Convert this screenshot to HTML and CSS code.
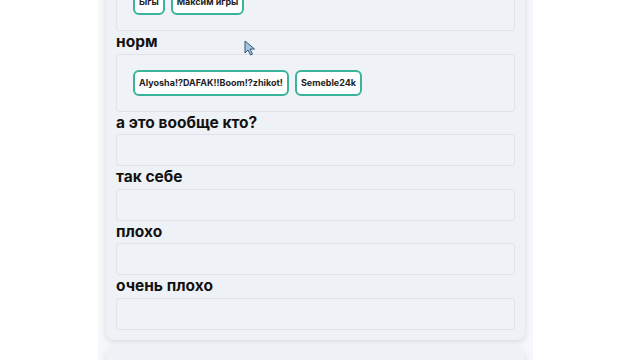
FILE: index.html
```html
<!DOCTYPE html>
<html lang="ru">
<head>
    <meta charset="UTF-8">
    <meta name="viewport" content="width=device-width, initial-scale=1.0">
    <title>Тир-лист</title>
    <link rel="stylesheet" href="styles.css">
</head>
<body>

<div class="page">
    <div class="card">
        <div class="tier-box">
            <span class="chip">Ыгы</span>
            <span class="chip">Максим игры</span>
        </div>

        <h3 class="tier-title">норм</h3>
        <div class="tier-box">
            <span class="chip">Alyosha!?DAFAK!!Boom!?zhikot!</span>
            <span class="chip">Semeble24k</span>
        </div>

        <h3 class="tier-title">а это вообще кто?</h3>
        <div class="tier-box"></div>

        <h3 class="tier-title">так себе</h3>
        <div class="tier-box"></div>

        <h3 class="tier-title">плохо</h3>
        <div class="tier-box"></div>

        <h3 class="tier-title">очень плохо</h3>
        <div class="tier-box"></div>
    </div>

    <div class="card card-next"></div>
</div>

<svg class="cursor" width="12" height="16" viewBox="0 0 12 16">
    <path d="M1 1 L1 13 L4 10 L6.5 15 L8.5 14 L6 9 L10.5 9 Z" fill="#a9c6e0" stroke="#2f5578" stroke-width="1" stroke-linejoin="round"/>
</svg>

</body>
</html>
```

FILE: styles.css
```css
body {
    margin: 0;
    background-color: #ffffff;
    font-family: Inter, "Liberation Sans", Arial, sans-serif;
    color: #111111;
    overflow: hidden;
}
.page {
    width: 435px;
    margin-left: 98px;
    padding: 0 8px;
    box-sizing: border-box;
    background-color: #f5f7fa;
    min-height: 100vh;
}
.card {
    margin-top: -37px;
    padding: 10px;
    background-color: #eef1f5;
    border-radius: 8px;
    box-shadow: 0 2px 6px rgba(0, 0, 0, 0.12);
}
.card-next {
    margin-top: 8px;
    height: 60px;
}
.tier-title {
    margin: 0;
    font-size: 15.5px;
    font-weight: 700;
    line-height: 22.5px;
    color: #111111;
}
.tier-box {
    display: flex;
    flex-wrap: wrap;
    gap: 6px;
    padding: 15px 16px;
    box-sizing: border-box;
    background-color: #eff2f6;
    border: 1px solid #e0e4ea;
    border-radius: 3px;
}
.tier-box:empty {
    height: 32px;
    padding: 0;
}
.chip {
    display: inline-block;
    padding: 4px 4px;
    font-size: 9px;
    font-weight: 700;
    line-height: 14px;
    color: #1d1d1d;
    background-color: #ffffff;
    border: 2px solid #3cb39b;
    border-radius: 6px;
}
.cursor {
    position: absolute;
    left: 244px;
    top: 40px;
}
```
